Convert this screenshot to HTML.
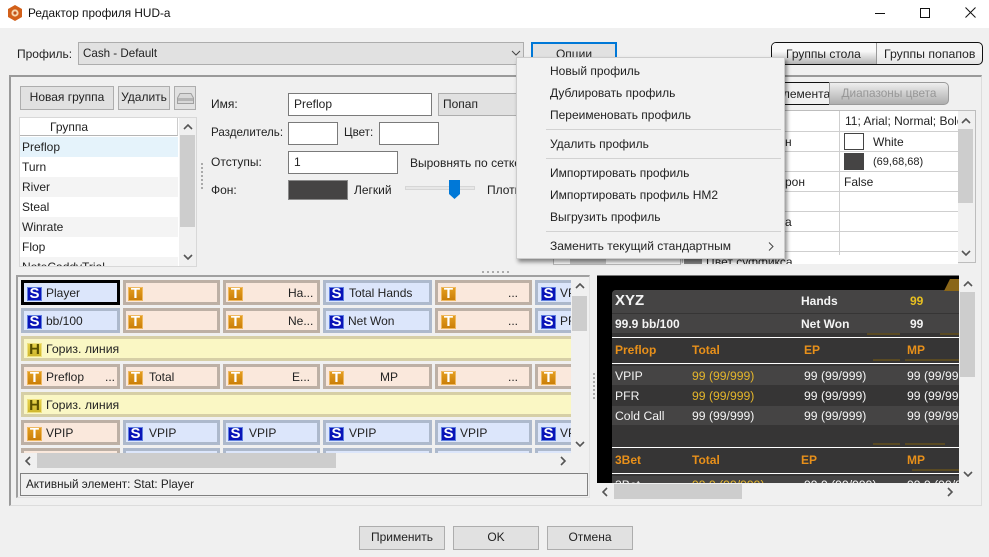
<!DOCTYPE html>
<html><head><meta charset="utf-8">
<style>
html,body{margin:0;padding:0}
body{width:989px;height:557px;overflow:hidden;position:relative;background:#f0f0f0;font:12px/16px "Liberation Sans",sans-serif;color:#222}
div,span{position:absolute;box-sizing:border-box;white-space:nowrap}
.btn{background:#e1e1e1;border:1px solid #adadad;text-align:center;line-height:21px}
.inp{background:#fff;border:1px solid #7a7a7a}
.c{height:25px;border:3px solid;overflow:hidden}
.s{background:#dce6fb;border-color:#adb9cc}
.t{background:#fae8dc;border-color:#bdb0a5}
.h{background:#faf7c4;border-color:#d6cfa6}
.c b{position:absolute;left:2px;top:4px;width:15px;height:14px;font:bold 15px/14px "Liberation Sans",sans-serif;text-align:center}
.s b{background:#0a14b8;color:#fff;box-shadow:inset 1px 1px 0 #5f7fe0,inset -1px -1px 0 #5f7fe0}
.t b{background:linear-gradient(#e6a020,#c87c08);color:#fff;box-shadow:inset 0 0 0 1px #eeb860}
.h b{background:linear-gradient(#e8d44c,#cdb52c);color:#5a5000;box-shadow:inset 0 0 0 1px #eee080}
.c span{top:2px}
.row{height:20px;width:160px;left:20px;padding-left:2px;line-height:20px;font-size:12px}
.m{left:550px;font-size:12px}
.sep{left:546px;width:235px;height:1px;background:#d2d2d2}
.sb{background:#cdcdcd}
.l{height:1px;background:#cfcfcf}
.w{height:1px;background:#fff;left:612px;width:347px}
.pv{color:#f4f4f4;font-size:12.2px}
.b{font-weight:bold;font-size:12px}
.y{color:#e3b52c}
.o{color:#e8901a;font-weight:bold}
.ln{height:2px;background:#5a4a22}
</style></head><body>
<!-- title bar -->
<div style="left:0;top:0;width:989px;height:28px;background:#fff"></div>
<svg style="position:absolute;left:7px;top:5px" width="16" height="16" viewBox="0 0 16 16"><polygon points="8,0 15,4 15,12 8,16 1,12 1,4" fill="#d2601a"/><circle cx="8" cy="8" r="3.6" fill="#f6d8b0"/><circle cx="8" cy="8" r="1.6" fill="#c0501a"/></svg>
<div style="left:28px;top:5px;font-size:11.8px;color:#111">Редактор профиля HUD-а</div>
<div style="left:875px;top:13px;width:10px;height:1px;background:#111"></div>
<div style="left:920px;top:8px;width:10px;height:10px;border:1px solid #111"></div>
<svg style="position:absolute;left:965px;top:7px" width="11" height="11"><path d="M.5.5L10.5 10.5M10.5.5L.5 10.5" stroke="#111" fill="none"/></svg>

<!-- profile row -->
<div style="left:17px;top:46px">Профиль:</div>
<div class="btn" style="left:78px;top:42px;width:446px;height:23px;text-align:left;padding-left:4px;font-size:11.6px">Cash - Default</div>
<svg style="position:absolute;left:511px;top:50px" width="10" height="7"><path d="M1 1L5 5L9 1" stroke="#444" fill="none"/></svg>
<div class="btn" style="left:531px;top:42px;width:86px;height:23px;border:2px solid #0078d7;line-height:20px">Опции</div>
<div style="left:771px;top:42px;width:212px;height:23px;border:1px solid #111;border-radius:5px;background:linear-gradient(#f4f4f4 50%,#e4e4e4);overflow:hidden">
 <div style="left:0;top:0;width:105px;height:21px;background:linear-gradient(#f8f8f8 40%,#b4b4b4);border-right:1px solid #999"></div>
 <span style="left:14px;top:3px">Группы стола</span><span style="left:112px;top:3px;font-size:12.3px">Группы попапов</span>
</div>

<!-- main panel -->
<div style="left:9px;top:75px;width:973px;height:431px;border:2px solid #9a9a9a;border-right:1px solid #dcdcdc;border-bottom:1px solid #dcdcdc"></div>

<div class="btn" style="left:20px;top:86px;width:94px;height:24px">Новая группа</div>
<div class="btn" style="left:118px;top:86px;width:52px;height:24px">Удалить</div>
<div class="btn" style="left:174px;top:86px;width:22px;height:24px"></div>
<svg style="position:absolute;left:177px;top:93px" width="17" height="11"><path d="M3 .5H14L16.500 5V10.500H.5V5Z" fill="#d8d8d8" stroke="#a0a0a0"/><rect x="1" y="5" width="15" height="3" fill="#b4b4b4"/></svg>

<!-- list -->
<div style="left:19px;top:117px;width:178px;height:150px;background:#fff;border:1px solid #d8d8d8;overflow:hidden">
</div>
<div style="left:20px;top:118px;width:158px;height:18px;padding-left:30px;line-height:18px;border-bottom:1px solid #b5b5b5;border-right:1px solid #ccc">Группа</div>
<div class="row" style="top:137px;background:#e5f3fb;width:158px">Preflop</div>
<div class="row" style="top:157px;background:#fff;width:158px">Turn</div>
<div class="row" style="top:177px;background:#f4f4f4;width:158px">River</div>
<div class="row" style="top:197px;background:#fff;width:158px">Steal</div>
<div class="row" style="top:217px;background:#f4f4f4;width:158px">Winrate</div>
<div class="row" style="top:237px;background:#fff;width:158px">Flop</div>
<div style="left:20px;top:257px;width:158px;height:9px;overflow:hidden;background:#f4f4f4"><span style="left:2px;top:2px">NoteCaddyTrial</span></div>
<div style="left:179px;top:118px;width:17px;height:148px;background:#f0f0f0"></div>
<div class="sb" style="left:180px;top:135px;width:15px;height:92px"></div>
<svg style="position:absolute;left:183px;top:124px" width="10" height="7"><path d="M1 5L5 1L9 5" stroke="#555" stroke-width="1.6" fill="none"/></svg>
<svg style="position:absolute;left:183px;top:254px" width="10" height="7"><path d="M1 1L5 5L9 1" stroke="#555" stroke-width="1.6" fill="none"/></svg>
<div style="left:201px;top:163px;width:2px;height:27px;background:repeating-linear-gradient(#aaa 0 2px,transparent 2px 4px)"></div>

<!-- fields -->
<div style="left:211px;top:96px">Имя:</div>
<div class="inp" style="left:288px;top:93px;width:144px;height:23px;padding-left:5px;line-height:21px">Preflop</div>
<div class="btn" style="left:438px;top:93px;width:90px;height:23px;text-align:left;padding-left:4px">Попап</div>
<div style="left:211px;top:125px;font-size:11.6px">Разделитель:</div>
<div class="inp" style="left:288px;top:122px;width:50px;height:23px"></div>
<div style="left:344px;top:125px;font-size:11.6px">Цвет:</div>
<div class="inp" style="left:379px;top:122px;width:60px;height:23px"></div>
<div style="left:211px;top:154px">Отступы:</div>
<div class="inp" style="left:288px;top:151px;width:110px;height:23px;padding-left:5px;line-height:21px">1</div>
<div style="left:410px;top:155px">Выровнять по сетке</div>
<div style="left:211px;top:182px">Фон:</div>
<div style="left:288px;top:180px;width:60px;height:20px;background:#454444;border:1px solid #8a8a8a"></div>
<div style="left:354px;top:182px">Легкий</div>
<div style="left:405px;top:186px;width:70px;height:4px;background:#e7e7e7;border:1px solid #d6d6d6"></div>
<svg style="position:absolute;left:449px;top:180px" width="11" height="19"><path d="M0 0H11V14L5.500 19L0 14Z" fill="#0078d7"/></svg>
<div style="left:487px;top:182px">Плотный</div>

<!-- right tabs -->
<div style="left:700px;top:82px;width:129px;height:23px;border:1px solid #111;border-right:0;border-radius:5px 0 0 5px;background:#f0f0f0"></div>
<div style="left:777px;top:86px">элемента</div>
<div style="left:829px;top:82px;width:120px;height:23px;border:1px solid #9a9a9a;border-radius:0 5px 5px 0;background:linear-gradient(#eeeeee,#aeaeae);color:#979797;text-align:center;line-height:21px;font-size:11.8px">Диапазоны цвета</div>

<!-- prop table -->
<div style="left:682px;top:110px;width:294px;height:153px;background:#fff;border:1px solid #bdbdbd;overflow:hidden"></div>
<div class="l" style="left:683px;top:131px;width:275px"></div>
<div class="l" style="left:683px;top:151px;width:275px"></div>
<div class="l" style="left:683px;top:171px;width:275px"></div>
<div class="l" style="left:683px;top:191px;width:275px"></div>
<div class="l" style="left:683px;top:211px;width:275px"></div>
<div class="l" style="left:683px;top:231px;width:275px"></div>
<div class="l" style="left:683px;top:251px;width:275px"></div>
<div style="left:839px;top:111px;width:1px;height:152px;background:#cfcfcf"></div>
<div style="left:845px;top:113px;width:113px;overflow:hidden;height:18px">11; Arial; Normal; Bold</div>
<div style="left:844px;top:133px;width:20px;height:17px;background:#fff;border:1px solid #444"></div>
<div style="left:873px;top:134px">White</div>
<div style="left:844px;top:153px;width:20px;height:17px;background:#454444;border:1px solid #444"></div>
<div style="left:873px;top:154px;font-size:11px">(69,68,68)</div>
<div style="left:844px;top:174px">False</div>
<div style="left:785px;top:134px">н</div>
<div style="left:785px;top:174px">рон</div>
<div style="left:785px;top:214px">а</div>
<div style="left:958px;top:111px;width:17px;height:151px;background:#f0f0f0"></div>
<div class="sb" style="left:958px;top:129px;width:15px;height:74px"></div>
<svg style="position:absolute;left:961px;top:118px" width="10" height="7"><path d="M1 5L5 1L9 5" stroke="#555" stroke-width="1.600" fill="none"/></svg>
<svg style="position:absolute;left:961px;top:250px" width="10" height="7"><path d="M1 1L5 5L9 1" stroke="#555" stroke-width="1.600" fill="none"/></svg>
<div style="left:683px;top:255px;width:275px;height:9px;background:#fff;overflow:hidden"><div style="left:1px;top:3px;width:18px;height:8px;background:#888"></div><span style="left:23px;top:-1px">Цвет суффикса</span></div>
<div style="left:553px;top:259px;width:128px;height:6px;background:#fff;border:1px solid #bbb;border-top:0"></div>
<div style="left:570px;top:259px;width:36px;height:5px;background:#cdcdcd"></div>

<div style="left:482px;top:271px;width:27px;height:2px;background:repeating-linear-gradient(90deg,#aaa 0 2px,transparent 2px 5px)"></div>

<!-- grid panel -->
<div style="left:16px;top:275px;width:574px;height:223px;border:2px solid #a0a0a0;border-right:1px solid #e2e2e2;border-bottom:1px solid #e2e2e2"></div>
<div style="left:0;top:0;width:571px;height:453px;overflow:hidden">
 <div class="c s" style="left:21px;top:280px;width:99px;border-color:#000"><b style="left:3px">S</b><span style="left:22px">Player</span></div>
 <div class="c t" style="left:123px;top:280px;width:97px"><b>T</b></div>
 <div class="c t" style="left:223px;top:280px;width:97px"><b>T</b><span style="left:62px">Ha...</span></div>
 <div class="c s" style="left:323px;top:280px;width:109px"><b style="left:3px">S</b><span style="left:23px">Total Hands</span></div>
 <div class="c t" style="left:435px;top:280px;width:97px"><b style="left:3px">T</b><span style="left:70px">...</span></div>
 <div class="c s" style="left:535px;top:280px;width:97px"><b style="left:3px">S</b><span style="left:22px">VPIP</span></div>

 <div class="c s" style="left:21px;top:308px;width:99px"><b style="left:3px">S</b><span style="left:22px">bb/100</span></div>
 <div class="c t" style="left:123px;top:308px;width:97px"><b>T</b></div>
 <div class="c t" style="left:223px;top:308px;width:97px"><b>T</b><span style="left:62px">Ne...</span></div>
 <div class="c s" style="left:323px;top:308px;width:109px"><b style="left:3px">S</b><span style="left:22px">Net Won</span></div>
 <div class="c t" style="left:435px;top:308px;width:97px"><b style="left:3px">T</b><span style="left:70px">...</span></div>
 <div class="c s" style="left:535px;top:308px;width:97px"><b style="left:3px">S</b><span style="left:22px">PFR</span></div>

 <div class="c h" style="left:21px;top:336px;width:620px"><b style="left:3px">H</b><span style="left:22px;font-size:12.3px">Гориз. линия</span></div>

 <div class="c t" style="left:21px;top:364px;width:99px"><b style="left:3px">T</b><span style="left:22px">Preflop</span><span style="left:81px">...</span></div>
 <div class="c t" style="left:123px;top:364px;width:97px"><b>T</b><span style="left:23px">Total</span></div>
 <div class="c t" style="left:223px;top:364px;width:97px"><b>T</b><span style="left:66px">E...</span></div>
 <div class="c t" style="left:323px;top:364px;width:109px"><b style="left:3px">T</b><span style="left:54px">MP</span></div>
 <div class="c t" style="left:435px;top:364px;width:97px"><b style="left:3px">T</b><span style="left:70px">...</span></div>
 <div class="c t" style="left:535px;top:364px;width:97px"><b style="left:3px">T</b></div>

 <div class="c h" style="left:21px;top:392px;width:620px"><b style="left:3px">H</b><span style="left:22px;font-size:12.3px">Гориз. линия</span></div>

 <div class="c t" style="left:21px;top:420px;width:99px"><b style="left:3px">T</b><span style="left:22px">VPIP</span></div>
 <div class="c s" style="left:123px;top:420px;width:97px"><b>S</b><span style="left:23px">VPIP</span></div>
 <div class="c s" style="left:223px;top:420px;width:97px"><b>S</b><span style="left:23px">VPIP</span></div>
 <div class="c s" style="left:323px;top:420px;width:109px"><b style="left:3px">S</b><span style="left:23px">VPIP</span></div>
 <div class="c s" style="left:435px;top:420px;width:97px"><b style="left:3px">S</b><span style="left:22px">VPIP</span></div>
 <div class="c s" style="left:535px;top:420px;width:97px"><b style="left:3px">S</b><span style="left:22px">VPIP</span></div>

 <div class="c t" style="left:21px;top:448px;width:99px"></div>
 <div class="c s" style="left:123px;top:448px;width:97px"></div>
 <div class="c s" style="left:223px;top:448px;width:97px"></div>
 <div class="c s" style="left:323px;top:448px;width:109px"></div>
 <div class="c s" style="left:435px;top:448px;width:97px"></div>
 <div class="c s" style="left:535px;top:448px;width:97px"></div>
</div>
<div class="sb" style="left:572px;top:296px;width:15px;height:35px"></div>
<svg style="position:absolute;left:575px;top:283px" width="10" height="7"><path d="M1 5L5 1L9 5" stroke="#555" stroke-width="1.600" fill="none"/></svg>
<svg style="position:absolute;left:575px;top:441px" width="10" height="7"><path d="M1 1L5 5L9 1" stroke="#555" stroke-width="1.600" fill="none"/></svg>
<div class="sb" style="left:37px;top:453px;width:299px;height:15px"></div>
<svg style="position:absolute;left:25px;top:456px" width="7" height="10"><path d="M5 1L1 5L5 9" stroke="#555" stroke-width="1.600" fill="none"/></svg>
<svg style="position:absolute;left:560px;top:456px" width="7" height="10"><path d="M1 1L5 5L1 9" stroke="#555" stroke-width="1.600" fill="none"/></svg>
<div style="left:20px;top:473px;width:568px;height:23px;border:1px solid #808080;padding-left:5px;line-height:21px;font-size:11.7px">Активный элемент: Stat: Player</div>

<div style="left:593px;top:373px;width:2px;height:27px;background:repeating-linear-gradient(#aaa 0 2px,transparent 2px 4px)"></div>

<!-- preview -->
<div style="left:597px;top:275px;width:362px;height:208px;background:#000;border-top:1px solid #777;overflow:hidden"></div>
<div style="left:612px;top:290px;width:347px;height:193px;background:#363535;border-radius:4px 0 0 0;overflow:hidden"></div>
<div style="left:612px;top:290px;width:347px;height:23px;background:#454444;border-radius:4px 0 0 0"></div>
<div style="left:612px;top:314px;width:347px;height:19px;background:#454444"></div>
<div style="left:612px;top:366px;width:347px;height:19px;background:#454444"></div>
<div style="left:612px;top:406px;width:347px;height:19px;background:#454444"></div>
<div style="left:612px;top:476px;width:347px;height:7px;background:#454444"></div>
<div class="ln" style="left:867px;top:333px;width:33px"></div>
<div class="ln" style="left:940px;top:333px;width:19px"></div>
<div class="ln" style="left:873px;top:359px;width:27px"></div>
<div class="ln" style="left:905px;top:359px;width:54px"></div>
<div class="ln" style="left:873px;top:443px;width:27px"></div>
<div class="ln" style="left:905px;top:443px;width:40px"></div>
<div class="ln" style="left:912px;top:469px;width:47px"></div>
<div class="w" style="top:337px"></div>
<div class="w" style="top:363px"></div>
<div class="w" style="top:447px"></div>
<div class="w" style="top:473px"></div>
<svg style="position:absolute;left:940px;top:279px" width="19" height="12"><polygon points="4,12 10,0 19,0 19,12" fill="#8a6618"/></svg>

<div class="pv b" style="left:615px;top:293px;font-size:15px">XYZ</div>
<div class="pv b" style="left:615px;top:316px">99.9 bb/100</div>
<div class="pv b" style="left:801px;top:293px">Hands</div>
<div class="pv b y" style="left:910px;top:293px;color:#e8c020">99</div>
<div class="pv b" style="left:801px;top:316px">Net Won</div>
<div class="pv b" style="left:910px;top:316px">99</div>
<div class="o" style="left:615px;top:342px">Preflop</div>
<div class="o" style="left:692px;top:342px">Total</div>
<div class="o" style="left:804px;top:342px">EP</div>
<div class="o" style="left:907px;top:342px">MP</div>
<div class="pv" style="left:615px;top:368px">VPIP</div>
<div class="pv y" style="left:692px;top:368px">99 (99/999)</div>
<div class="pv" style="left:804px;top:368px">99 (99/999)</div>
<div class="pv" style="left:907px;top:368px;width:52px;overflow:hidden">99 (99/999)</div>
<div class="pv" style="left:615px;top:388px">PFR</div>
<div class="pv y" style="left:692px;top:388px">99 (99/999)</div>
<div class="pv" style="left:804px;top:388px">99 (99/999)</div>
<div class="pv" style="left:907px;top:388px;width:52px;overflow:hidden">99 (99/999)</div>
<div class="pv" style="left:615px;top:408px">Cold Call</div>
<div class="pv" style="left:692px;top:408px">99 (99/999)</div>
<div class="pv" style="left:804px;top:408px">99 (99/999)</div>
<div class="pv" style="left:907px;top:408px;width:52px;overflow:hidden">99 (99/999)</div>
<div class="o" style="left:615px;top:452px">3Bet</div>
<div class="o" style="left:692px;top:452px">Total</div>
<div class="o" style="left:801px;top:452px">EP</div>
<div class="o" style="left:907px;top:452px">MP</div>
<div style="left:597px;top:476px;width:362px;height:7px;overflow:hidden">
 <span class="pv" style="left:18px;top:1px">3Bet</span>
 <span class="pv y" style="left:95px;top:1px">99.9 (99/999)</span>
 <span class="pv" style="left:207px;top:1px">99.9 (99/999)</span>
 <span class="pv" style="left:310px;top:1px">99.9 (99/999)</span>
</div>
<div class="sb" style="left:960px;top:292px;width:15px;height:85px"></div>
<svg style="position:absolute;left:963px;top:281px" width="10" height="7"><path d="M1 5L5 1L9 5" stroke="#555" stroke-width="1.600" fill="none"/></svg>
<svg style="position:absolute;left:963px;top:471px" width="10" height="7"><path d="M1 1L5 5L9 1" stroke="#555" stroke-width="1.600" fill="none"/></svg>
<div class="sb" style="left:614px;top:484px;width:128px;height:15px"></div>
<svg style="position:absolute;left:602px;top:487px" width="7" height="10"><path d="M5 1L1 5L5 9" stroke="#555" stroke-width="1.600" fill="none"/></svg>
<svg style="position:absolute;left:947px;top:487px" width="7" height="10"><path d="M1 1L5 5L1 9" stroke="#555" stroke-width="1.600" fill="none"/></svg>

<!-- menu -->
<div style="left:516px;top:57px;width:269px;height:202px;background:#f2f2f2;border:1px solid #ccc;box-shadow:2px 3px 4px rgba(0,0,0,.45)"></div>
<div class="m" style="top:63px">Новый профиль</div>
<div class="m" style="top:85px">Дублировать профиль</div>
<div class="m" style="top:107px">Переименовать профиль</div>
<div class="sep" style="top:129px"></div>
<div class="m" style="top:136px">Удалить профиль</div>
<div class="sep" style="top:158px"></div>
<div class="m" style="top:165px">Импортировать профиль</div>
<div class="m" style="top:187px">Импортировать профиль HM2</div>
<div class="m" style="top:209px">Выгрузить профиль</div>
<div class="sep" style="top:231px"></div>
<div class="m" style="top:238px">Заменить текущий стандартным</div>
<svg style="position:absolute;left:768px;top:242px" width="6" height="9"><path d="M1 .5L5 4.500L1 8.500" stroke="#444" fill="none"/></svg>

<!-- bottom buttons -->
<div class="btn" style="left:359px;top:526px;width:86px;height:24px">Применить</div>
<div class="btn" style="left:453px;top:526px;width:86px;height:24px">OK</div>
<div class="btn" style="left:547px;top:526px;width:86px;height:24px">Отмена</div>
</body></html>
